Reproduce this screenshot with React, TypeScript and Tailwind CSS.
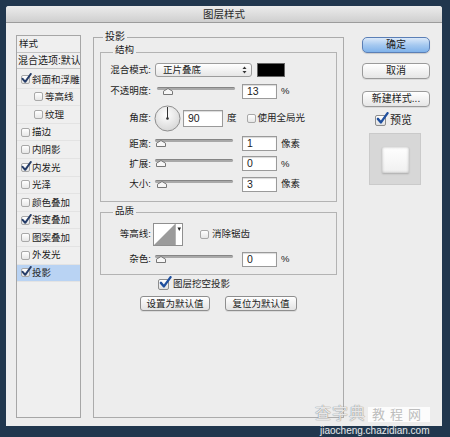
import React from 'react';

function Box({ checked, big }: { checked?: boolean; big?: boolean }) {
  return (
    <span
      className={
        big
          ? 'relative inline-block w-[11px] h-[11px] shrink-0 rounded-[2px] border border-[#8d8d8d] bg-gradient-to-b from-white to-[#e0e0e0]'
          : 'relative inline-block w-[9px] h-[9px] shrink-0 rounded-[2px] border border-[#a8a8a8] bg-gradient-to-b from-white to-[#e6e6e6]'
      }
    >
      {checked && (
        <svg
          className={big ? 'absolute left-[0px] top-[-4px]' : 'absolute left-[-1px] top-[-3px]'}
          width={big ? 13 : 11}
          height={big ? 13 : 11}
          viewBox="0 0 11 11"
        >
          <path
            d="M1.6 5.8 L4.2 8.8 L9.8 1"
            stroke={big ? '#1f4f9e' : '#253c68'}
            strokeWidth="2"
            fill="none"
            strokeLinecap="round"
            strokeLinejoin="round"
          />
        </svg>
      )}
    </span>
  );
}

function Slider({ pos }: { pos: number }) {
  return (
    <div className="relative w-[78px] h-[9px]">
      <div className="absolute left-0 right-0 top-0 h-[3px] rounded-full bg-[#a9a9a9] border-t border-[#858585]" />
      <svg className="absolute top-[1px]" style={{ left: pos }} width="10" height="7" viewBox="0 0 10 7">
        <path d="M5 0.5 L9.5 3.2 L9.5 6.5 L0.5 6.5 L0.5 3.2 Z" fill="#f7f7f7" stroke="#777" strokeWidth="1" />
      </svg>
    </div>
  );
}

function Input({ v, w }: { v: string; w: string }) {
  return (
    <div
      className={
        w === 'wide'
          ? 'ml-[2px] w-[40px] h-[17px] bg-white border border-[#9a9a9a] shadow-[inset_0_1px_1px_rgba(0,0,0,0.15)] pl-[4px] flex items-center text-[10.5px]'
          : 'ml-[9px] w-[35px] h-[15px] bg-white border border-[#9a9a9a] shadow-[inset_0_1px_1px_rgba(0,0,0,0.15)] pl-[4px] flex items-center text-[10.5px]'
      }
    >
      {v}
    </div>
  );
}

function Btn({ children, w }: { children: React.ReactNode; w: string }) {
  return (
    <div
      className={
        w === 'a'
          ? 'w-[70px] h-[15px] rounded-[3px] border border-[#8e8e8e] bg-gradient-to-b from-white to-[#e3e3e3] shadow-[0_1px_0_rgba(0,0,0,0.08)] flex items-center justify-center'
          : 'w-[72px] h-[15px] rounded-[3px] border border-[#8e8e8e] bg-gradient-to-b from-white to-[#e3e3e3] shadow-[0_1px_0_rgba(0,0,0,0.08)] flex items-center justify-center'
      }
    >
      {children}
    </div>
  );
}

const items: { t: string; c: boolean; sub?: boolean; sel?: boolean }[] = [
  { t: '斜面和浮雕', c: true },
  { t: '等高线', c: false, sub: true },
  { t: '纹理', c: false, sub: true },
  { t: '描边', c: false },
  { t: '内阴影', c: false },
  { t: '内发光', c: true },
  { t: '光泽', c: false },
  { t: '颜色叠加', c: false },
  { t: '渐变叠加', c: true },
  { t: '图案叠加', c: false },
  { t: '外发光', c: false },
  { t: '投影', c: true, sel: true },
];

export default function App() {
  return (
    <div className="relative w-[450px] h-[437px] overflow-hidden bg-[#21374e] pt-[6px] pl-[6px] font-['Liberation_Sans','Noto_Sans_CJK_SC',sans-serif] text-[#1c1c1c] text-[9.5px] leading-none">
      <div className="w-[436px] h-[420px] bg-[#ededed] flex flex-col rounded-t-[3px] overflow-hidden">
        {/* title bar */}
        <div className="h-[17px] shrink-0 bg-gradient-to-b from-[#ececec] to-[#cfcfcf] border-b border-[#9c9c9c] flex items-center justify-center text-[10.5px] text-[#2a2a2a]">
          图层样式
        </div>

        {/* body */}
        <div className="flex items-start pt-[12px] pl-[10px]">
          {/* left list */}
          <div className="w-[65px] h-[383px] border border-[#a6a6a6] bg-[#efefef] overflow-hidden">
            <div className="h-[17px] border-b border-[#c4c4c4] flex items-center pl-[2px]">样式</div>
            <div className="h-[16px] border-b border-[#c4c4c4] flex items-center pl-[1px] whitespace-nowrap text-[10px]">混合选项:默认</div>
            <div className="pt-[2px]">
              {items.map((it) => (
                <div
                  key={it.t}
                  className={
                    it.sel
                      ? 'h-[17.6px] flex items-center bg-[#b9d3f3] pl-[4px] border-b border-[#e3e3e3]'
                      : 'h-[17.6px] flex items-center pl-[4px] border-b border-[#e3e3e3]'
                  }
                >
                  {it.sub && <span className="w-[13px] shrink-0" />}
                  <Box checked={it.c} />
                  <span className="ml-[2px] whitespace-nowrap">{it.t}</span>
                </div>
              ))}
            </div>
          </div>

          {/* main group */}
          <div className="relative ml-[12px] mt-[2px] w-[251px] h-[381px] border border-[#ababab] px-[6px]">
            <span className="absolute left-[9px] -top-[8px] px-[2px] bg-[#ededed] leading-[14px] text-[10px]">投影</span>

            {/* 结构 */}
            <div className="relative mt-[14px] border border-[#b3b3b3] pt-[8px] pb-[6px]">
              <span className="absolute left-[12px] -top-[10px] px-[2px] bg-[#ededed] leading-[14px]">结构</span>

              <div className="flex items-center h-[18px]">
                <span className="w-[50px] text-right whitespace-nowrap">混合模式:</span>
                <div className="ml-[4px] w-[97px] h-[14px] rounded-[3px] border border-[#9c9c9c] bg-gradient-to-b from-white to-[#e6e6e6] flex items-center pl-[7px] pr-[4px] justify-between">
                  <span>正片叠底</span>
                  <svg width="5" height="8" viewBox="0 0 5 8">
                    <path d="M2.5 0.5 L4.5 3 L0.5 3 Z" fill="#333" />
                    <path d="M2.5 7.5 L4.5 5 L0.5 5 Z" fill="#333" />
                  </svg>
                </div>
                <div className="ml-[5px] w-[28px] h-[14px] bg-black border border-[#666]" />
              </div>

              <div className="flex items-center h-[24px]">
                <span className="w-[50px] text-right whitespace-nowrap">不透明度:</span>
                <div className="ml-[6px] w-[76px]">
                  <Slider pos={6} />
                </div>
                <Input v="13" w="n" />
                <span className="ml-[4px]">%</span>
              </div>

              <div className="flex items-center h-[30px]">
                <span className="w-[50px] text-right whitespace-nowrap">角度:</span>
                <svg className="ml-[3px]" width="27" height="27" viewBox="0 0 27 27">
                  <defs>
                    <radialGradient id="dg" cx="45%" cy="35%" r="70%">
                      <stop offset="0" stopColor="#ffffff" />
                      <stop offset="1" stopColor="#d4d4d4" />
                    </radialGradient>
                  </defs>
                  <circle cx="13.5" cy="13.5" r="12.5" fill="url(#dg)" stroke="#8e8e8e" strokeWidth="1" />
                  <line x1="13.5" y1="13.5" x2="13.5" y2="2" stroke="#333" strokeWidth="1" />
                  <circle cx="13.5" cy="13.5" r="1.3" fill="#333" />
                </svg>
                <Input v="90" w="wide" />
                <span className="ml-[4px]">度</span>
                <span className="ml-[10px] flex items-center">
                  <Box />
                </span>
                <span className="ml-[2px] whitespace-nowrap">使用全局光</span>
              </div>

              <div className="flex items-center h-[21px]">
                <span className="w-[50px] text-right whitespace-nowrap">距离:</span>
                <div className="ml-[4px]">
                  <Slider pos={1} />
                </div>
                <Input v="1" w="n" />
                <span className="ml-[4px]">像素</span>
              </div>

              <div className="flex items-center h-[19px]">
                <span className="w-[50px] text-right whitespace-nowrap">扩展:</span>
                <div className="ml-[4px]">
                  <Slider pos={1} />
                </div>
                <Input v="0" w="n" />
                <span className="ml-[4px]">%</span>
              </div>

              <div className="flex items-center h-[22px]">
                <span className="w-[50px] text-right whitespace-nowrap">大小:</span>
                <div className="ml-[4px]">
                  <Slider pos={2} />
                </div>
                <Input v="3" w="n" />
                <span className="ml-[4px]">像素</span>
              </div>
            </div>

            {/* 品质 */}
            <div className="relative mt-[10px] border border-[#b3b3b3] pt-[6px] pb-[5px]">
              <span className="absolute left-[12px] -top-[9px] px-[2px] bg-[#ededed] leading-[14px]">品质</span>

              <div className="flex items-center h-[30px]">
                <span className="w-[50px] text-right whitespace-nowrap">等高线:</span>
                <svg className="ml-[2px]" width="30" height="23" viewBox="0 0 30 23">
                  <rect x="0.5" y="0.5" width="29" height="22" fill="#ffffff" stroke="#8f8f8f" />
                  <path d="M1 22 L22 1 L22 22 Z" fill="#9b9b9b" />
                  <line x1="22.5" y1="1" x2="22.5" y2="22" stroke="#b5b5b5" />
                  <path d="M24.5 4.5 L28 4.5 L26.25 8 Z" fill="#222" />
                </svg>
                <span className="ml-[17px] flex items-center">
                  <Box />
                </span>
                <span className="ml-[3px] whitespace-nowrap">消除锯齿</span>
              </div>

              <div className="flex items-center h-[20px]">
                <span className="w-[50px] text-right whitespace-nowrap">杂色:</span>
                <div className="ml-[4px]">
                  <Slider pos={1} />
                </div>
                <Input v="0" w="n" />
                <span className="ml-[4px]">%</span>
              </div>
            </div>

            <div className="flex items-center h-[18px] pl-[58px]">
              <Box checked big />
              <span className="ml-[4px] whitespace-nowrap">图层挖空投影</span>
            </div>

            <div className="flex justify-center gap-[15px] mt-[3px]">
              <Btn w="a">设置为默认值</Btn>
              <Btn w="b">复位为默认值</Btn>
            </div>
          </div>

          {/* right column */}
          <div className="ml-[18px] mt-[2px] w-[68px] flex flex-col text-[10px]">
            <div className="h-[16px] rounded-[5px] border border-[#5b7fb6] bg-gradient-to-b from-[#dbe9f9] via-[#a6c9f0] to-[#7fb2ea] flex items-center justify-center shadow-[0_1px_1px_rgba(0,0,0,0.15)]">
              确定
            </div>
            <div className="mt-[10px] h-[16px] rounded-[4px] border border-[#9a9a9a] bg-gradient-to-b from-white to-[#e6e6e6] flex items-center justify-center shadow-[0_1px_0_rgba(0,0,0,0.08)]">
              取消
            </div>
            <div className="mt-[12px] h-[16px] rounded-[4px] border border-[#9a9a9a] bg-gradient-to-b from-white to-[#e6e6e6] flex items-center justify-center whitespace-nowrap shadow-[0_1px_0_rgba(0,0,0,0.08)]">
              新建样式...
            </div>
            <div className="mt-[4px] h-[18px] flex items-center pl-[13px]">
              <Box checked big />
              <span className="ml-[4px] text-[11px]">预览</span>
            </div>
            <div className="mt-[4px] ml-[7px] w-[52px] h-[52px] bg-[#d7d7d7] border border-[#cacaca] flex items-center justify-center">
              <div className="w-[27px] h-[26px] mt-[2px] bg-gradient-to-b from-white to-[#f0f0f0] rounded-[1px] shadow-[inset_0_0_3px_rgba(0,0,0,0.3),0_1px_2px_rgba(0,0,0,0.2)]" />
            </div>
          </div>
        </div>
      </div>

      {/* watermark */}
      <div className="absolute left-[315px] top-[406px] flex items-center">
        <span className="text-[16px] leading-none text-white/80 [text-shadow:0_0_1px_#888,0_0_1px_#888] tracking-[1px]">查字典</span>
        <span className="ml-[2px] h-[15px] px-[4px] bg-white/85 flex items-center text-[13px] text-[#bdbdbd] tracking-[5px] leading-none">教程网</span>
      </div>
      <div className="absolute left-[320px] top-[426px] text-[10px] leading-none text-white/90 font-['Liberation_Sans',sans-serif]">
        jiaocheng.chazidian.com
      </div>
    </div>
  );
}
